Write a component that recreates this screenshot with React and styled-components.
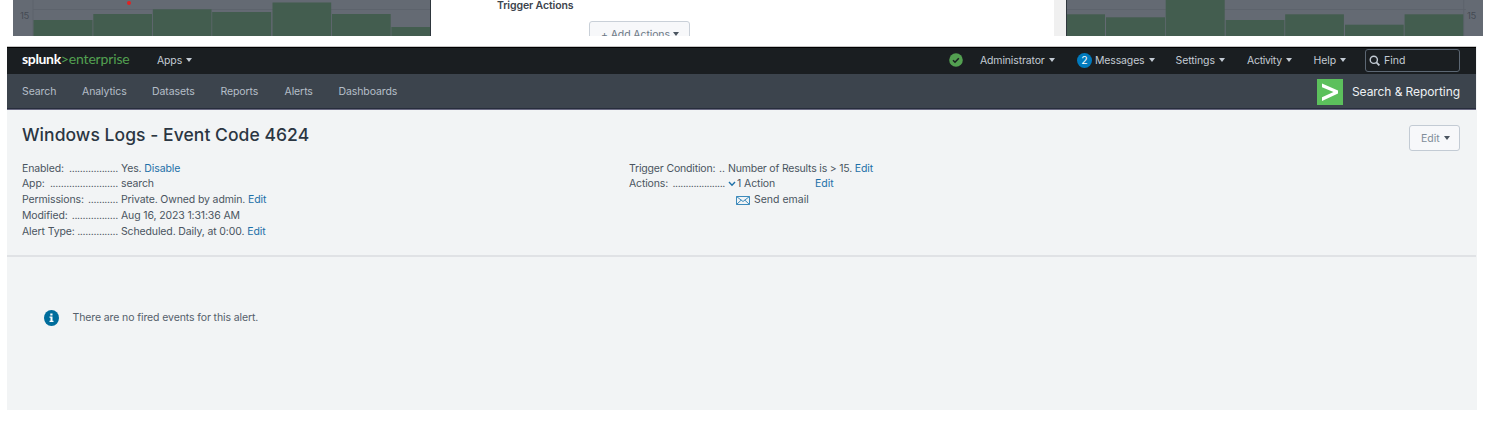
import React from "react";
import styled, { createGlobalStyle } from "styled-components";

const Global = createGlobalStyle`
  * { box-sizing: border-box; }
  body { margin: 0; background: #fff; overflow: hidden; }
  #root { font-family: Inter, "Liberation Sans", sans-serif; }
`;

const Screen = styled.div`
  width: 1493px;
  height: 436px;
  overflow: hidden;
`;

const T = styled.span`
  white-space: pre;
  letter-spacing: ${(p) => p.$ls || 0}px;
`;

/* dimmed search page with the alert dialog on top */
const Backdrop = styled.section`
  display: flex;
  height: 36px;
  margin: 0 10px 10px 13px;
  overflow: hidden;
`;
const Chart = styled.svg`
  display: block;
  flex: none;
`;
const Dialog = styled.div`
  width: 623px;
  height: 36px;
  flex: none;
  padding-left: 66px;
  overflow: hidden;
`;
const DialogLabel = styled.div`
  height: 21px;
  font-size: 10.5px;
  font-weight: 600;
  line-height: 12px;
  color: #3c444d;
`;
const AddButton = styled.div`
  display: flex;
  align-items: center;
  gap: 3px;
  width: 101px;
  height: 26px;
  margin-left: 92px;
  padding-left: 11px;
  border: 1px solid #c9d0d8;
  border-radius: 3px;
  background: #f7f8fa;
  color: #6b7785;
  font-size: 10.5px;
`;
const ScrollTrack = styled.div`
  width: 12px;
  flex: none;
  background: #f0f0f0;
`;

const Page = styled.main`
  width: 1470px;
  height: 364px;
  margin-left: 7px;
  background: #f2f4f5;
`;
const TopBar = styled.header`
  display: flex;
  align-items: center;
  width: 1469px;
  height: 28px;
  padding: 0 0 1px 15px;
  border-top: 1px solid #c3c3c3;
  box-shadow: inset 0 1px 0 #000;
  background: #1a1e21;
  color: #c3cbd4;
  font-size: 10.5px;
`;
const Brand = styled.div`
  width: 135px;
  height: 18px;
  font-family: Lato, sans-serif;
  font-size: 14px;
  line-height: 16px;
  color: #fff;
  font-weight: 700;
`;
const BrandGreen = styled.span`
  color: #53a051;
  font-weight: 400;
`;
const MenuItem = styled.div`
  display: flex;
  align-items: center;
  gap: 4px;
  width: ${(p) => p.$w}px;
  flex: none;
`;
const Status = styled.div`
  width: 31px;
  height: 14px;
  margin-left: auto;
`;
const Count = styled.span`
  display: flex;
  align-items: center;
  justify-content: center;
  width: 15px;
  height: 15px;
  margin-right: -1px;
  border-radius: 50%;
  background: #007abd;
  color: #fff;
`;
const Find = styled.div`
  display: flex;
  align-items: center;
  gap: 4px;
  width: 95px;
  height: 23px;
  margin-right: 16px;
  padding-left: 3px;
  border: 1px solid #5c6773;
  border-radius: 3px;
`;
const AppBar = styled.nav`
  display: flex;
  align-items: center;
  width: 1469px;
  height: 36px;
  padding: 0 16px 0 15px;
  border-bottom: 1px solid #6a6a82;
  box-shadow: inset 0 -1px 0 #272d3c;
  background: #3c444d;
  color: #b5bec8;
  font-size: 10.5px;
`;
const NavItem = styled.div`
  width: ${(p) => p.$w}px;
`;
const AppLogo = styled.svg`
  margin: 0 9px 0 auto;
`;
const AppName = styled.div`
  width: 108px;
  font-size: 12px;
  color: #eef1f4;
`;

const Head = styled.section`
  width: 1469px;
  height: 147px;
  padding: 14px 16px 0 15px;
  border-bottom: 2px solid #e0e2e5;
`;
const TitleRow = styled.div`
  display: flex;
  justify-content: space-between;
  height: 36.6px;
`;
const Title = styled.h1`
  margin: 0;
  font-size: 17.5px;
  line-height: 21px;
  font-weight: 500;
  color: #2b3642;
`;
const EditButton = styled.div`
  display: flex;
  align-items: center;
  gap: 4px;
  width: 51px;
  height: 26px;
  margin-top: 1px;
  padding-left: 11px;
  border: 1px solid #c3cbd4;
  border-radius: 3px;
  background: #f7f8fa;
  color: #818d99;
  font-size: 10.5px;
`;
const Columns = styled.div`
  display: grid;
  grid-template-columns: 607px 1fr;
`;
const Row = styled.div`
  display: flex;
  height: 15.9px;
  font-size: 10.5px;
  line-height: 16px;
  color: #4a545f;
`;
const Label = styled.div`
  display: flex;
  justify-content: space-between;
  width: 96px;
  margin-right: 3px;
`;
const Link = styled.span`
  color: #1d70a8;
  white-space: pre;
  letter-spacing: ${(p) => p.$ls || 0}px;
`;
const ActionName = styled.span`
  display: inline-flex;
  align-items: center;
  gap: 1px;
  width: 87px;
`;
const ActionType = styled.div`
  display: flex;
  align-items: center;
  gap: 4px;
  padding-left: 107px;
`;
const Notice = styled.div`
  display: flex;
  align-items: center;
  gap: 14px;
  margin: 52.5px 0 0 36.5px;
  font-size: 10.5px;
  color: #55606b;
`;

const CaretIcon = styled.svg`
  color: ${(p) => p.$color || "currentColor"};
`;
const Caret = ({ color }) => (
  <CaretIcon $color={color} width="6" height="4" viewBox="0 0 6 4">
    <path d="M0 0h6L3 4z" fill="currentColor" />
  </CaretIcon>
);

function Histogram({ width, bars, axis, gridFrom, labelX, dot, edge }) {
  return (
    <Chart width={width} height="36" viewBox={`0 0 ${width} 36`}>
      <rect width={width} height="36" fill="#646a73" />
      <path d={`M${gridFrom} 9.5h400`} stroke="#5d636c" />
      <path d={`M${axis} 0v36`} stroke="#5d636c" />
      {bars.map(([x, w, y]) => (
        <rect key={x} x={x} y={y} width={w} height={36 - y} fill="#435d4f" />
      ))}
      <text x={labelX} y="19" fontSize="9.5" letterSpacing="-0.3" fill="#454b53">15</text>
      {dot && <circle cx="116" cy="3" r="2" fill="#e32222" />}
      <rect x={edge} width="1" height="36" fill="#2e363d" />
    </Chart>
  );
}

const leftBars = [[20.5, 59, 20], [80.3, 58.7, 14], [139.8, 58.7, 9.3], [199.2, 59, 12], [259.5, 58.7, 2.5], [319, 58.7, 14], [378.4, 40, 27]];
const rightBars = [[0, 39, 14.3], [40, 59, 17.3], [99.7, 59, 0], [159.7, 58.7, 20], [219.2, 58.7, 14.3], [279, 58.7, 24.7], [338.6, 58.7, 14.3]];

const nav = [["Search", 60], ["Analytics", 70], ["Datasets", 68.5], ["Reports", 64], ["Alerts", 54], ["Dashboards", 70]];

const details = [
  ["Enabled:", 18, "Yes. ", "Disable"],
  ["App:", 25, "search", ""],
  ["Permissions:", 11, "Private. Owned by admin. ", "Edit"],
  ["Modified:", 17, "Aug 16, 2023 1:31:36 AM", ""],
  ["Alert Type:", 15, "Scheduled. Daily, at 0:00. ", "Edit"],
];

export default function App() {
  return (
    <Screen>
      <Global />
      <Backdrop>
        <Histogram width={418} bars={leftBars} axis={20} gridFrom={20} labelX={7} dot edge={417} />
        <Dialog>
          <DialogLabel><T $ls={-0.12}>Trigger Actions</T></DialogLabel>
          <AddButton><T $ls={-0.1}>+ Add Actions</T><Caret color="#4a545f" /></AddButton>
        </Dialog>
        <ScrollTrack />
        <Histogram width={417} bars={rightBars} axis={397.7} gridFrom={0} labelX={401} edge={0} />
      </Backdrop>
      <Page>
        <TopBar>
          <Brand><T $ls={-0.35}>splunk</T><BrandGreen><T $ls={-0.15}>&gt;enterprise</T></BrandGreen></Brand>
          <MenuItem $w={60}><T $ls={-0.15}>Apps</T><Caret /></MenuItem>
          <Status>
            <svg width="14" height="14" viewBox="0 0 14 14">
              <circle cx="7" cy="7" r="6.8" fill="#53a051" />
              <path d="M4 7.2l2 2 3.8-4" fill="none" stroke="#1a1d21" strokeWidth="1.5" />
            </svg>
          </Status>
          <MenuItem $w={97}><T $ls={-0.15}>Administrator</T><Caret /></MenuItem>
          <MenuItem $w={98.5}><Count>2</Count><T $ls={-0.15}>Messages</T><Caret /></MenuItem>
          <MenuItem $w={71.5}><T $ls={-0.1}>Settings</T><Caret /></MenuItem>
          <MenuItem $w={66.5}><T $ls={-0.3}>Activity</T><Caret /></MenuItem>
          <MenuItem $w={51.5}><T $ls={-0.1}>Help</T><Caret /></MenuItem>
          <Find>
            <svg width="11" height="11" viewBox="0 0 11 11" fill="none" stroke="currentColor" strokeWidth="1.4">
              <circle cx="4.8" cy="4.8" r="3.6" />
              <path d="M7.4 7.4l3 3" strokeWidth="1.8" />
            </svg>
            <T>Find</T>
          </Find>
        </TopBar>
        <AppBar>
          {nav.map(([name, w]) => <NavItem key={name} $w={w}><T $ls={-0.1}>{name}</T></NavItem>)}
          <AppLogo width="26" height="26" viewBox="0 0 26 26">
            <rect width="26" height="26" fill="#5cc05c" />
            <path d="M5 4.5L21 11.6v3L5 22v-3.8l11.5-5.1L5 8.2z" fill="#fff" />
          </AppLogo>
          <AppName><T $ls={-0.08}>Search &amp; Reporting</T></AppName>
        </AppBar>
        <Head>
          <TitleRow>
            <Title><T $ls={0.05}>Windows Logs - Event Code 4624</T></Title>
            <EditButton><T>Edit</T><Caret color="#4a545f" /></EditButton>
          </TitleRow>
          <Columns>
            <div>
              {details.map(([label, dots, value, link]) => (
                <Row key={label}>
                  <Label><T $ls={-0.12}>{label}</T><T $ls={-0.3}>{".".repeat(dots)}</T></Label>
                  <T $ls={-0.13}>{value}</T><Link $ls={-0.1}>{link}</Link>
                </Row>
              ))}
            </div>
            <div>
              <Row>
                <Label><T $ls={-0.17}>Trigger Condition:</T><T>..</T></Label>
                <T $ls={-0.2}>Number of Results is &gt; 15. </T><Link $ls={-0.1}>Edit</Link>
              </Row>
              <Row>
                <Label><T $ls={-0.15}>Actions:</T><T $ls={-0.4}>{".".repeat(20)}</T></Label>
                <ActionName>
                  <svg width="8" height="6" viewBox="0 0 8 6" fill="none" stroke="#1d70a8" strokeWidth="1.4"><path d="M1 1l3 3.2L7 1" /></svg>
                  <T $ls={-0.1}>1 Action</T>
                </ActionName>
                <Link>Edit</Link>
              </Row>
              <Row>
                <ActionType>
                  <svg width="14" height="9" viewBox="0 0 14 9" fill="none" stroke="#3d8abb" strokeWidth="1"><path d="M.5.5h13v8H.5zM.5.5L7 5.5 13.5.5M.5 8.5l4.7-4.4M13.5 8.5L8.8 4.1" /></svg>
                  <T>Send email</T>
                </ActionType>
              </Row>
            </div>
          </Columns>
        </Head>
        <Notice>
          <svg width="15" height="16" viewBox="0 0 15 16">
            <ellipse cx="7.5" cy="8" rx="7.5" ry="8" fill="#006d9c" />
            <path d="M6.3 3.5h2.2v2H6.3zM5.5 6.5h3v4.2h1v1.3h-4v-1.3h1V7.8h-1z" fill="#fff" />
          </svg>
          <T $ls={-0.11}>There are no fired events for this alert.</T>
        </Notice>
      </Page>
    </Screen>
  );
}
